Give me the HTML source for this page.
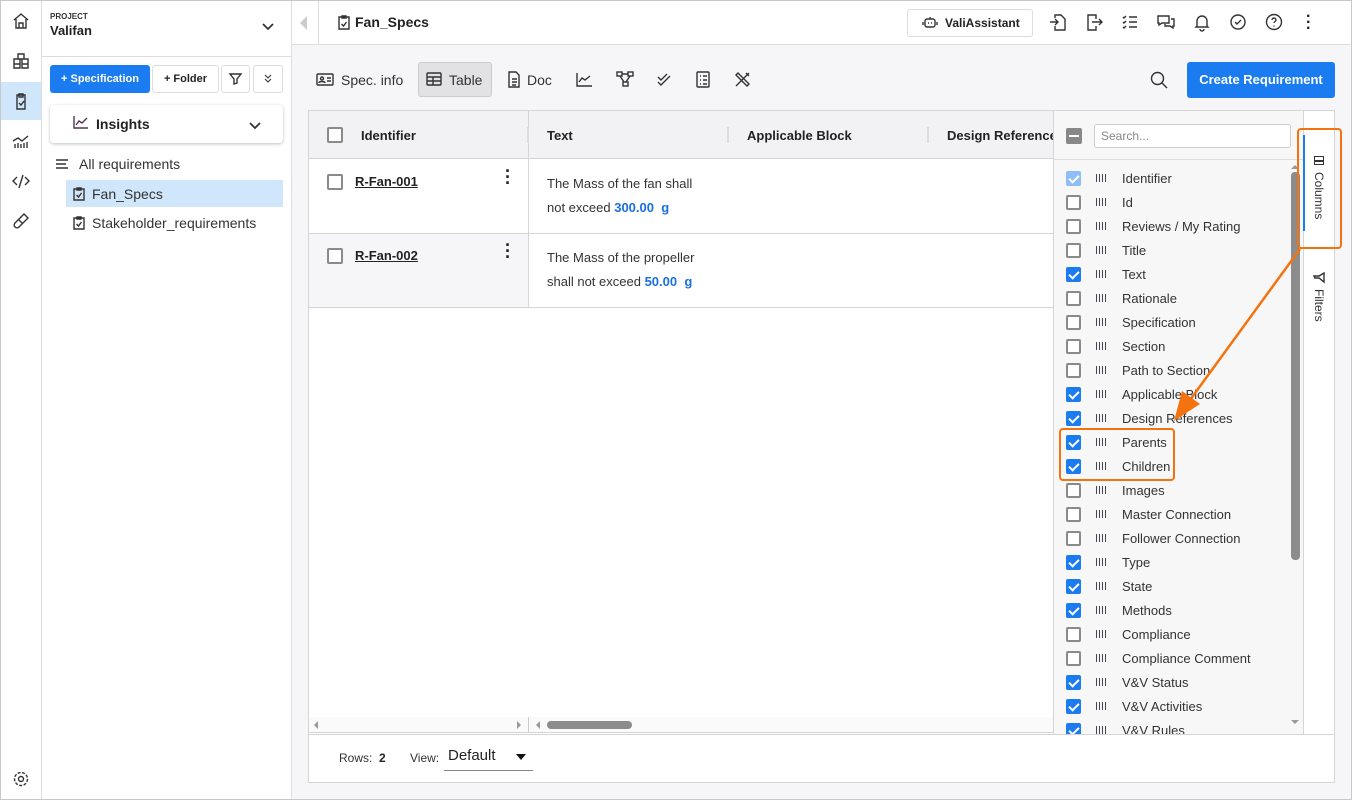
<!DOCTYPE html>
<html><head><meta charset="utf-8"><style>
*{box-sizing:border-box;margin:0;padding:0}
body{width:1352px;height:800px;overflow:hidden;font-family:"Liberation Sans",sans-serif;color:#222;background:#fff;position:relative;font-size:13px}
.abs{position:absolute}
.cb{position:absolute;width:15px;height:15px;border:2px solid #8a8a8a;border-radius:2px;background:#fff}
.cb.on{background:#1a7cf0;border-color:#1a7cf0}
.cb.on:after{content:"";position:absolute;left:3px;top:0px;width:4px;height:8px;border:solid #fff;border-width:0 2px 2px 0;transform:rotate(45deg)}
.cb.dis{background:#8fbdf6;border-color:#8fbdf6}
.cb.dis:after{content:"";position:absolute;left:3px;top:0px;width:4px;height:8px;border:solid #fff;border-width:0 2px 2px 0;transform:rotate(45deg)}
.item{position:absolute;left:1066px;height:24px;width:220px;font-size:13px;color:#333}
.item .cb{left:0;top:4px}
.item .g{position:absolute;left:30px;top:7px;width:11px;height:8px;background:repeating-linear-gradient(90deg,#445 0 1px,transparent 1px 3px)}
.item span{position:absolute;left:56px;top:4px}
svg{position:absolute;fill:none;stroke:#333;stroke-width:1.4}
</style></head><body>
<div class="abs" style="left:0;top:0;width:1352px;height:800px;border:1px solid #c8c8c8;z-index:50;pointer-events:none"></div>
<!-- rail -->
<div class="abs" style="left:0;top:0;width:42px;height:800px;border-right:1px solid #ddd;background:#fff"></div>
<div class="abs" style="left:1px;top:82px;width:40px;height:38px;background:#cfe6fb"></div>
<svg style="left:11px;top:11px" width="20" height="20" viewBox="0 0 20 20"><path d="M3 9l7-6 7 6M5 8v9h10V8M8 17v-5h4v5"/></svg>
<svg style="left:11px;top:51px" width="20" height="20" viewBox="0 0 20 20"><path d="M7 3h6v5H7zM3 8h6v5H3zM11 8h6v5h-6zM3 13h6v4H3zM11 13h6v4h-6z"/></svg>
<svg style="left:11px;top:91px" width="20" height="20" viewBox="0 0 20 20"><path d="M6 4h8v14H6zM8 3h4v3H8zM8 12l2 2 3-4"/></svg>
<svg style="left:11px;top:131px" width="20" height="20" viewBox="0 0 20 20"><path d="M2 10l5-3 4 3 6-5M4 17v-4M7 17v-5M10 17v-4M13 17v-5M16 17v-6"/></svg>
<svg style="left:11px;top:171px" width="20" height="20" viewBox="0 0 20 20"><path d="M6 6l-4 4 4 4M14 6l4 4-4 4M12 4l-4 13"/></svg>
<svg style="left:11px;top:211px" width="20" height="20" viewBox="0 0 20 20"><path d="M13 3l4 4-9 9a2.8 2.8 0 01-4-4zM8 9l4 4"/></svg>
<svg style="left:11px;top:769px" width="20" height="20" viewBox="0 0 20 20"><circle cx="10" cy="10" r="2.5"/><circle cx="10" cy="10" r="6.5" stroke-dasharray="3 1.5"/></svg>
<!-- sidebar -->
<div class="abs" style="left:42px;top:0;width:250px;height:800px;border-right:1px solid #ddd;background:#fff"></div>
<div class="abs" style="left:42px;top:56px;width:249px;height:1px;background:#ddd"></div>
<div class="abs" style="left:50px;top:12px;font-size:8px;font-weight:bold;color:#333">PROJECT</div>
<div class="abs" style="left:50px;top:23px;font-size:13px;font-weight:bold;color:#222">Valifan</div>
<svg style="left:260px;top:20px" width="16" height="14" viewBox="0 0 16 14"><path d="M3 4l5 5 5-5" stroke-width="1.8"/></svg>
<div class="abs" style="left:50px;top:65px;width:100px;height:28px;background:#1a7cf0;border-radius:3px;color:#fff;font-size:11px;font-weight:bold;line-height:28px;text-align:center">+ Specification</div>
<div class="abs" style="left:152px;top:65px;width:67px;height:28px;border:1px solid #ddd;border-radius:3px;font-size:11px;font-weight:bold;line-height:26px;text-align:center">+ Folder</div>
<div class="abs" style="left:221px;top:65px;width:29px;height:28px;border:1px solid #ddd;border-radius:3px"></div>
<svg style="left:228px;top:71px" width="15" height="15" viewBox="0 0 15 15"><path d="M2 3h11l-4 5v4l-3 1V8z"/></svg>
<div class="abs" style="left:253px;top:65px;width:30px;height:28px;border:1px solid #ddd;border-radius:3px"></div>
<svg style="left:261px;top:72px" width="14" height="14" viewBox="0 0 14 14"><path d="M4 3l3 3 3-3M4 7l3 3 3-3" stroke-width="1.1"/></svg>
<div class="abs" style="left:50px;top:105px;width:233px;height:38px;background:#fff;border-radius:4px;box-shadow:0 1px 3px rgba(0,0,0,.25)"></div>
<svg style="left:73px;top:115px" width="16" height="14" viewBox="0 0 16 14"><path d="M1 1v12h14M3 10l3-4 3 2 5-5" stroke="#535"/></svg>
<div class="abs" style="left:96px;top:116px;font-size:14px;font-weight:bold">Insights</div>
<svg style="left:247px;top:120px" width="16" height="12" viewBox="0 0 16 12"><path d="M3 3l5 5 5-5" stroke-width="1.8"/></svg>
<svg style="left:55px;top:157px" width="14" height="14" viewBox="0 0 14 14"><path d="M1 3h12M1 7h10M1 11h12"/></svg>
<div class="abs" style="left:79px;top:156px;font-size:14px;color:#333">All requirements</div>
<div class="abs" style="left:66px;top:180px;width:217px;height:27px;background:#cfe6fb"></div>
<svg style="left:72px;top:186px" width="14" height="15" viewBox="0 0 14 15"><path d="M2 3h10v11H2zM5 2h4v2H5zM4.5 9l2 2 3-4"/></svg>
<div class="abs" style="left:92px;top:186px;font-size:14px;color:#333">Fan_Specs</div>
<svg style="left:72px;top:215px" width="14" height="15" viewBox="0 0 14 15"><path d="M2 3h10v11H2zM5 2h4v2H5zM4.5 9l2 2 3-4"/></svg>
<div class="abs" style="left:92px;top:215px;font-size:14px;color:#333">Stakeholder_requirements</div>
<!-- main bg -->
<div class="abs" style="left:292px;top:45px;width:1060px;height:755px;background:#f6f6f8"></div>
<div class="abs" style="left:292px;top:0;width:1060px;height:45px;background:#fff;border-bottom:1px solid #ddd"></div>
<div class="abs" style="left:318px;top:0;width:1px;height:45px;background:#ddd"></div>
<div class="abs" style="left:300px;top:16px;width:0;height:0;border-top:7px solid transparent;border-bottom:7px solid transparent;border-right:7px solid #ccc"></div>
<svg style="left:337px;top:14px" width="14" height="16" viewBox="0 0 14 16"><path d="M2 3h10v12H2zM5 2h4v2H5zM4.5 10l2 2 3-4"/></svg>
<div class="abs" style="left:355px;top:14px;font-size:14px;font-weight:bold">Fan_Specs</div>
<div class="abs" style="left:907px;top:9px;width:126px;height:28px;border:1px solid #ddd;border-radius:3px"></div>
<svg style="left:922px;top:16px" width="16" height="14" viewBox="0 0 16 14"><rect x="3" y="3" width="10" height="8" rx="2"/><path d="M8 1v2M1 6v3M15 6v3M6 7h1M9 7h1"/></svg>
<div class="abs" style="left:945px;top:16px;font-size:12px;font-weight:bold">ValiAssistant</div>
<svg style="left:1048px;top:12px" width="20" height="20" viewBox="0 0 20 20"><path d="M7 6V3h6l4 4v11H7v-4M2 10h8M7 7l3 3-3 3"/></svg>
<svg style="left:1084px;top:12px" width="20" height="20" viewBox="0 0 20 20"><path d="M12 7V3H4v15h8v-4M8 10h10M15 7l3 3-3 3"/></svg>
<svg style="left:1120px;top:12px" width="20" height="20" viewBox="0 0 20 20"><path d="M3 5l1 1 2-2M3 10l1 1 2-2M3 15l1 1 2-2M9 5h8M9 10h8M9 15h8"/></svg>
<svg style="left:1156px;top:12px" width="20" height="20" viewBox="0 0 20 20"><path d="M2 4h11v7H6l-3 2v-2H2zM15 7h3v7h-1v2l-3-2h-5v-2"/></svg>
<svg style="left:1192px;top:12px" width="20" height="20" viewBox="0 0 20 20"><path d="M5 14V9a5 5 0 0110 0v5l1 1H4zM8 17a2 2 0 004 0"/></svg>
<svg style="left:1228px;top:12px" width="20" height="20" viewBox="0 0 20 20"><circle cx="10" cy="10" r="7"/><path d="M7 10l2 2 4-4"/></svg>
<svg style="left:1264px;top:12px" width="20" height="20" viewBox="0 0 20 20"><circle cx="10" cy="10" r="7.5"/><path d="M8 8a2 2 0 114 0c0 1.5-2 1.5-2 3M10 13.5v1"/></svg>
<div class="abs" style="left:1306px;top:14px;font-size:16px;font-weight:bold;line-height:6px">·<br>·<br>·</div>
<!-- toolbar -->
<svg style="left:316px;top:72px" width="18" height="15" viewBox="0 0 18 15"><rect x="1" y="2" width="16" height="11" rx="1"/><circle cx="6" cy="6.5" r="1.5"/><path d="M3 11c0-2 6-2 6 0M11 6h4M11 9h4"/></svg>
<div class="abs" style="left:341px;top:72px;font-size:14px;color:#333">Spec. info</div>
<div class="abs" style="left:418px;top:62px;width:74px;height:35px;background:#e2e2e4;border:1px solid #ccc;border-radius:3px"></div>
<svg style="left:426px;top:72px" width="16" height="14" viewBox="0 0 16 14"><rect x="1" y="1" width="14" height="12" rx="1"/><path d="M1 5h14M1 9h14M7 5v8"/></svg>
<div class="abs" style="left:449px;top:72px;font-size:14px;color:#333">Table</div>
<svg style="left:507px;top:71px" width="14" height="17" viewBox="0 0 14 17"><path d="M2 1h7l3 3v12H2zM5 8h5M5 11h5M5 14h4"/></svg>
<div class="abs" style="left:527px;top:72px;font-size:14px;color:#333">Doc</div>
<svg style="left:576px;top:72px" width="17" height="15" viewBox="0 0 17 15"><path d="M1 1v13h15M3 10l3-4 3 2 5-4"/></svg>
<svg style="left:616px;top:71px" width="18" height="16" viewBox="0 0 18 16"><rect x="1" y="1" width="5" height="4"/><rect x="12" y="1" width="5" height="4"/><rect x="7" y="11" width="5" height="4"/><path d="M6 3h6M4 5l4 6M14 5l-4 6"/></svg>
<svg style="left:656px;top:72px" width="16" height="15" viewBox="0 0 16 15"><path d="M2 5l3 3 6-6M2 10l3 3 9-9"/></svg>
<svg style="left:695px;top:71px" width="16" height="17" viewBox="0 0 16 17"><rect x="2" y="1" width="12" height="15" rx="1"/><path d="M5 5h1M8 5h4M5 9h1M8 9h4M5 13h1M8 13h4"/></svg>
<svg style="left:734px;top:71px" width="17" height="17" viewBox="0 0 17 17"><path d="M2 15L15 2M4 2l11 11-2 2L2 4zM12 2l3 3"/></svg>
<svg style="left:1149px;top:70px" width="20" height="20" viewBox="0 0 20 20"><circle cx="8.5" cy="8.5" r="6"/><path d="M13 13l5 5"/></svg>
<div class="abs" style="left:1187px;top:62px;width:148px;height:36px;background:#1a7cf0;border-radius:3px;color:#fff;font-weight:bold;font-size:13px;line-height:36px;text-align:center">Create Requirement</div>
<!-- table -->
<div class="abs" style="left:308px;top:110px;width:1027px;height:673px;background:#fff;border:1px solid #d5d5d5"></div>
<div class="abs" style="left:309px;top:111px;width:745px;height:48px;background:#f2f2f4;border-bottom:1px solid #d5d5d5"></div>
<div class="abs" style="left:528px;top:111px;width:1px;height:196px;background:#d5d5d5"></div>
<div class="abs" style="left:527px;top:127px;width:2px;height:16px;background:#ddd"></div>
<div class="abs" style="left:727px;top:127px;width:2px;height:16px;background:#ddd"></div>
<div class="abs" style="left:927px;top:127px;width:2px;height:16px;background:#ddd"></div>
<div class="cb" style="left:327px;top:127px;width:16px;height:16px"></div>
<div class="abs" style="left:361px;top:128px;font-weight:bold;font-size:13px">Identifier</div>
<div class="abs" style="left:547px;top:128px;font-weight:bold;font-size:13px">Text</div>
<div class="abs" style="left:747px;top:128px;font-weight:bold;font-size:13px">Applicable Block</div>
<div class="abs" style="left:947px;top:128px;font-weight:bold;font-size:13px;white-space:nowrap;width:107px;overflow:hidden">Design References</div>
<div class="abs" style="left:309px;top:233px;width:745px;height:1px;background:#d5d5d5"></div>
<div class="abs" style="left:309px;top:234px;width:219px;height:73px;background:#f6f6f8"></div>
<div class="abs" style="left:309px;top:307px;width:745px;height:1px;background:#d5d5d5"></div>
<div class="cb" style="left:327px;top:174px;width:16px;height:16px"></div>
<div class="abs" style="left:355px;top:174px;font-weight:bold;font-size:13px;text-decoration:underline">R-Fan-001</div>
<div class="abs" style="left:505px;top:168px;font-size:18px;font-weight:bold;line-height:6px">·<br>·<br>·</div>
<div class="abs" style="left:547px;top:172px;font-size:13px;line-height:24px;color:#333">The Mass of the fan shall<br>not exceed <b style="color:#1a6fe0">300.00&nbsp; g</b></div>
<div class="cb" style="left:327px;top:248px;width:16px;height:16px"></div>
<div class="abs" style="left:355px;top:248px;font-weight:bold;font-size:13px;text-decoration:underline">R-Fan-002</div>
<div class="abs" style="left:505px;top:242px;font-size:18px;font-weight:bold;line-height:6px">·<br>·<br>·</div>
<div class="abs" style="left:547px;top:246px;font-size:13px;line-height:24px;color:#333">The Mass of the propeller<br>shall not exceed <b style="color:#1a6fe0">50.00&nbsp; g</b></div>
<!-- h scroll -->
<div class="abs" style="left:309px;top:717px;width:745px;height:16px;background:#fafafa;border-bottom:1px solid #d5d5d5"></div>
<div class="abs" style="left:528px;top:717px;width:1px;height:16px;background:#ccc"></div>
<div class="abs" style="left:547px;top:721px;width:85px;height:8px;background:#8c8c8c;border-radius:4px"></div>
<div class="abs" style="left:314px;top:721px;border:4px solid transparent;border-right-color:#999;border-left:0"></div>
<div class="abs" style="left:517px;top:721px;border:4px solid transparent;border-left-color:#999;border-right:0"></div>
<div class="abs" style="left:536px;top:721px;border:4px solid transparent;border-right-color:#999;border-left:0"></div>
<div class="abs" style="left:309px;top:734px;width:1025px;height:1px;background:#d5d5d5"></div>
<div class="abs" style="left:339px;top:751px;font-size:12px;color:#333">Rows: <b style="color:#222">&nbsp;2</b></div>
<div class="abs" style="left:410px;top:751px;font-size:12px;color:#333">View:</div>
<div class="abs" style="left:448px;top:747px;font-size:15px;color:#222">Default</div>
<div class="abs" style="left:516px;top:754px;border:5px solid transparent;border-top:6px solid #111;border-bottom:0"></div>
<div class="abs" style="left:444px;top:770px;width:89px;height:1px;background:#888"></div>
<!-- columns panel -->
<div class="abs" style="left:1053px;top:111px;width:251px;height:623px;background:#f7f7f7;border-left:1px solid #d5d5d5;border-right:1px solid #d5d5d5"></div>
<div class="abs" style="left:1054px;top:159px;width:249px;height:1px;background:#ddd"></div>
<div class="abs" style="left:1066px;top:128px;width:16px;height:16px;background:#888;border-radius:2px"></div>
<div class="abs" style="left:1069px;top:135px;width:10px;height:2px;background:#fff"></div>
<div class="abs" style="left:1094px;top:124px;width:197px;height:24px;background:#fff;border:1px solid #ccc;border-radius:3px;padding:4px 6px;font-size:12px;color:#888">Search...</div>
<div class="abs" style="left:1291px;top:172px;width:9px;height:388px;background:#8c8c8c;border-radius:4px"></div>
<div class="abs" style="left:1291px;top:165px;border:4px solid transparent;border-bottom-color:#999;border-top:0"></div>
<div class="abs" style="left:1291px;top:720px;border:4px solid transparent;border-top-color:#999;border-bottom:0"></div>
<div class="abs" style="left:1054px;top:160px;width:236px;height:574px;overflow:hidden">
<div style="position:relative;left:-1054px;top:-163px">
<div class="item" style="top:170px"><div class="cb dis"></div><div class="g"></div><span>Identifier</span></div>
<div class="item" style="top:194px"><div class="cb"></div><div class="g"></div><span>Id</span></div>
<div class="item" style="top:218px"><div class="cb"></div><div class="g"></div><span>Reviews / My Rating</span></div>
<div class="item" style="top:242px"><div class="cb"></div><div class="g"></div><span>Title</span></div>
<div class="item" style="top:266px"><div class="cb on"></div><div class="g"></div><span>Text</span></div>
<div class="item" style="top:290px"><div class="cb"></div><div class="g"></div><span>Rationale</span></div>
<div class="item" style="top:314px"><div class="cb"></div><div class="g"></div><span>Specification</span></div>
<div class="item" style="top:338px"><div class="cb"></div><div class="g"></div><span>Section</span></div>
<div class="item" style="top:362px"><div class="cb"></div><div class="g"></div><span>Path to Section</span></div>
<div class="item" style="top:386px"><div class="cb on"></div><div class="g"></div><span>Applicable Block</span></div>
<div class="item" style="top:410px"><div class="cb on"></div><div class="g"></div><span>Design References</span></div>
<div class="item" style="top:434px"><div class="cb on"></div><div class="g"></div><span>Parents</span></div>
<div class="item" style="top:458px"><div class="cb on"></div><div class="g"></div><span>Children</span></div>
<div class="item" style="top:482px"><div class="cb"></div><div class="g"></div><span>Images</span></div>
<div class="item" style="top:506px"><div class="cb"></div><div class="g"></div><span>Master Connection</span></div>
<div class="item" style="top:530px"><div class="cb"></div><div class="g"></div><span>Follower Connection</span></div>
<div class="item" style="top:554px"><div class="cb on"></div><div class="g"></div><span>Type</span></div>
<div class="item" style="top:578px"><div class="cb on"></div><div class="g"></div><span>State</span></div>
<div class="item" style="top:602px"><div class="cb on"></div><div class="g"></div><span>Methods</span></div>
<div class="item" style="top:626px"><div class="cb"></div><div class="g"></div><span>Compliance</span></div>
<div class="item" style="top:650px"><div class="cb"></div><div class="g"></div><span>Compliance Comment</span></div>
<div class="item" style="top:674px"><div class="cb on"></div><div class="g"></div><span>V&amp;V Status</span></div>
<div class="item" style="top:698px"><div class="cb on"></div><div class="g"></div><span>V&amp;V Activities</span></div>
<div class="item" style="top:722px"><div class="cb on"></div><div class="g"></div><span>V&amp;V Rules</span></div>
</div></div>
<!-- side tabs -->
<div class="abs" style="left:1303px;top:135px;width:2px;height:96px;background:#1a7cf0"></div>
<div class="abs" style="left:1314px;top:156px;width:10px;height:9px;border:1.5px solid #333"></div>
<div class="abs" style="left:1314px;top:160px;width:10px;height:1.5px;background:#333"></div>
<div class="abs" style="left:1312px;top:172px;writing-mode:vertical-rl;font-size:12px;color:#333">Columns</div>
<svg style="left:1313px;top:271px" width="13" height="13" viewBox="0 0 13 13"><path d="M2 2h9L7 7v4L5 12V7z" transform="rotate(90 6.5 6.5)"/></svg>
<div class="abs" style="left:1312px;top:289px;writing-mode:vertical-rl;font-size:12px;color:#333">Filters</div>
<!-- annotations -->
<div class="abs" style="left:1297px;top:128px;width:45px;height:121px;border:2.5px solid #f5730f;border-radius:4px;z-index:20"></div>
<div class="abs" style="left:1059px;top:428px;width:116px;height:53px;border:2.5px solid #f5730f;border-radius:4px;z-index:20"></div>
<svg style="left:1160px;top:245px;z-index:21;stroke:#f5730f;fill:#f5730f" width="145" height="180" viewBox="0 0 145 180"><path d="M140 4L30 155" stroke-width="2.5" fill="none"/><path d="M14 176l8-30 18 13z" stroke="none"/></svg>
</body></html>
